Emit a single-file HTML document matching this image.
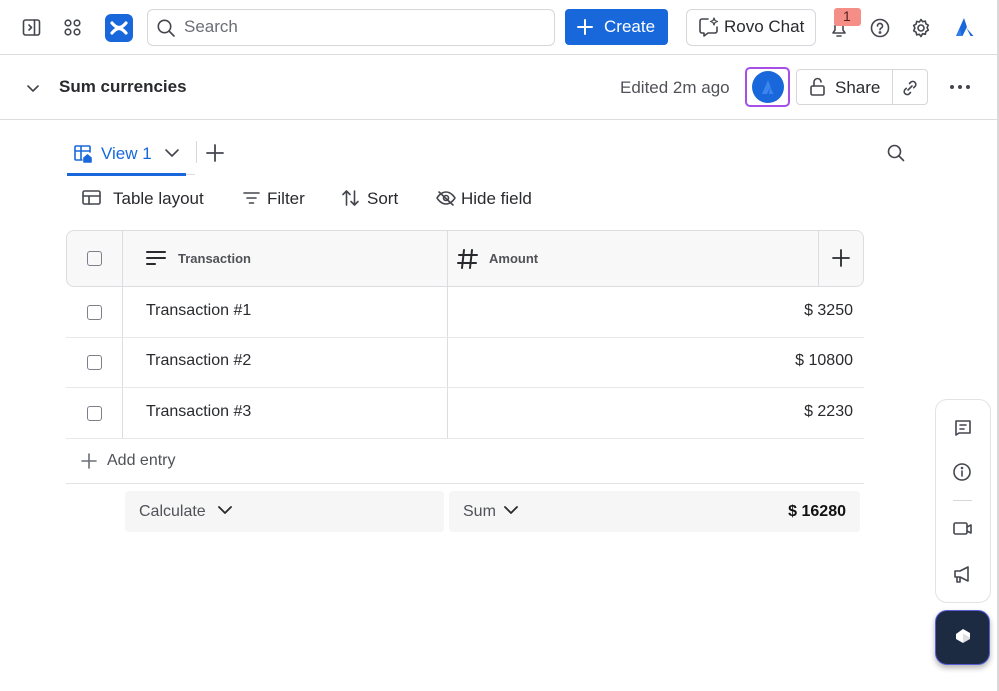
<!DOCTYPE html>
<html><head><meta charset="utf-8"><style>
*{box-sizing:border-box;margin:0;padding:0}
body{width:999px;height:691px;overflow:hidden;background:#fff;font-family:"Liberation Sans",sans-serif;color:#292a2e;position:relative}
.a{position:absolute}
svg{position:absolute;fill:none;stroke:#44464d;stroke-width:1.6;stroke-linecap:round;stroke-linejoin:round}
.btn{position:absolute;border:1px solid #d5d7db;border-radius:4px;background:#fff}
.t{position:absolute;white-space:nowrap}
</style></head><body>
<div class="a" style="left:997px;top:0;width:2px;height:691px;background:#d9d9d9"></div>
<div class="a" style="left:0;top:54px;width:997px;height:1px;background:#dcdde0"></div>
<div class="a" style="left:0;top:119px;width:997px;height:1px;background:#dcdde0"></div>
<svg style="left:22px;top:18px" width="20" height="20"><rect x="1.5" y="2" width="16" height="15" rx="2"/><path d="M12.5 2v15M7 7l2.5 2.5L7 12"/></svg>
<svg style="left:62px;top:17px" width="22" height="22"><circle cx="6" cy="6" r="2.8"/><circle cx="15" cy="6" r="2.8"/><circle cx="6" cy="15" r="2.8"/><circle cx="15" cy="15" r="2.8"/></svg>
<div class="a" style="left:105px;top:14px;width:28px;height:28px;border-radius:6px;background:#1868db"></div>
<svg style="left:105px;top:14px;stroke:#fff;stroke-width:3.2" width="28" height="28"><path d="M7 9c5 6 9 6 14 0M7 19c5-6 9-6 14 0"/></svg>
<div class="btn" style="left:147px;top:9px;width:408px;height:37px;border-radius:6px"></div>
<svg style="left:156px;top:18px" width="20" height="20"><circle cx="8.5" cy="8.5" r="6.2"/><path d="M13 13l5 5"/></svg>
<div class="t" style="left:184px;top:17px;font-size:17px;color:#6b6e76">Search</div>
<div class="a" style="left:565px;top:9px;width:103px;height:36px;border-radius:4px;background:#1868db"></div>
<svg style="left:576px;top:18px;stroke:#fff;stroke-width:2" width="18" height="18"><path d="M9 2v14M2 9h14"/></svg>
<div class="t" style="left:604px;top:17px;font-size:17px;color:#fff">Create</div>
<div class="btn" style="left:686px;top:9px;width:130px;height:37px;border-radius:6px"></div>
<svg style="left:698px;top:16px" width="22" height="22"><path d="M10 3H4a2 2 0 0 0-2 2v10a2 2 0 0 0 2 2h2v3l4-3h7a2 2 0 0 0 2-2v-4"/><path d="M16 2l1 2.5 2.5 1-2.5 1-1 2.5-1-2.5-2.5-1 2.5-1z" stroke-width="1.2"/></svg>
<div class="t" style="left:724px;top:17px;font-size:17px;color:#292a2e">Rovo Chat</div>
<svg style="left:829px;top:18px" width="20" height="20"><path d="M4 15h12l-2-3V8a4 4 0 0 0-8 0v4zM8 18h4"/></svg>
<div class="a" style="left:834px;top:8px;width:27px;height:18px;border-radius:3px;background:#f58e87"></div>
<div class="t" style="left:843px;top:8px;font-size:14px;color:#5a1d1d">1</div>
<svg style="left:869px;top:17px" width="22" height="22"><circle cx="11" cy="11" r="8.5"/><path d="M8.5 9a2.5 2.5 0 1 1 3.3 2.3c-.6.3-.8.7-.8 1.4"/><circle cx="11" cy="15.5" r=".6"/></svg>
<svg style="left:910px;top:17px" width="22" height="22"><circle cx="11" cy="11" r="3"/><path d="M11 2.5l1.6 2.2 2.7-.6.6 2.7 2.4 1.4-1.2 2.5 1.2 2.5-2.4 1.4-.6 2.7-2.7-.6L11 19.5l-1.6-2.2-2.7.6-.6-2.7-2.4-1.4L4.9 11 3.7 8.5l2.4-1.4.6-2.7 2.7.6z"/></svg>
<svg style="left:952px;top:16px;stroke:none" width="24" height="24"><path d="M12 2L4 20h6.5L15 11z" fill="#1868db"/><path d="M14.5 12l4 8h3z" fill="#1868db"/><path d="M8 13l-4 7h6z" fill="#357de8"/></svg>
<svg style="left:25px;top:80px" width="16" height="16"><path d="M3 6l5 5 5-5"/></svg>
<div class="t" style="left:59px;top:77px;font-size:17px;font-weight:bold;color:#292a2e">Sum currencies</div>
<div class="t" style="left:620px;top:78px;font-size:17px;color:#505258">Edited 2m ago</div>
<div class="a" style="left:745px;top:67px;width:45px;height:40px;border:2px solid #a64ee6;border-radius:5px"></div>
<div class="a" style="left:752px;top:71px;width:32px;height:32px;border-radius:50%;background:#1868db"></div>
<svg style="left:758px;top:77px;stroke:none" width="20" height="20"><path d="M10 3L4 17h5l3.5-7.5z" fill="#3c84f0"/><path d="M12 10l3.5 7h-4.5z" fill="#3c84f0"/></svg>
<div class="btn" style="left:796px;top:69px;width:132px;height:36px"></div>
<div class="a" style="left:892px;top:69px;width:1px;height:36px;background:#d5d7db"></div>
<svg style="left:808px;top:76px" width="20" height="22"><rect x="3" y="10" width="13" height="9" rx="1.5"/><path d="M6 10V6a3.5 3.5 0 0 1 7 0"/></svg>
<div class="t" style="left:835px;top:78px;font-size:17px;color:#292a2e">Share</div>
<svg style="left:900px;top:78px" width="20" height="20"><path d="M8 12l4-4M9.5 5.5l1.5-1.5a3 3 0 0 1 4.2 4.2l-1.5 1.5M10.5 14.5l-1.5 1.5a3 3 0 0 1-4.2-4.2l1.5-1.5"/></svg>
<svg style="left:948px;top:80px;stroke:none" width="24" height="14"><circle cx="4" cy="7" r="2" fill="#44464d"/><circle cx="12" cy="7" r="2" fill="#44464d"/><circle cx="20" cy="7" r="2" fill="#44464d"/></svg>
<svg style="left:73px;top:144px;stroke:#1868db" width="22" height="20"><path d="M9 16H3a1 1 0 0 1-1-1V3a1 1 0 0 1 1-1h13a1 1 0 0 1 1 1v5M2 7h15M8 2v14"/><path d="M11 18v-4l3.5-3 3.5 3v4z" fill="#1868db"/></svg>
<div class="t" style="left:101px;top:144px;font-size:17px;color:#1868db">View 1</div>
<svg style="left:163px;top:145px" width="18" height="16"><path d="M3 5l6 6 6-6"/></svg>
<div class="a" style="left:196px;top:141px;width:1px;height:22px;background:#d5d7db"></div>
<svg style="left:205px;top:143px;stroke-width:1.8" width="20" height="20"><path d="M10 2v16M2 10h16"/></svg>
<div class="a" style="left:67px;top:173px;width:119px;height:3px;background:#1868db"></div>
<div class="a" style="left:186px;top:174px;width:9px;height:1px;background:#dcdde0"></div>
<svg style="left:886px;top:143px" width="20" height="20"><circle cx="8.5" cy="8.5" r="6"/><path d="M13 13l4.5 4.5"/></svg>
<svg style="left:81px;top:189px" width="22" height="18"><rect x="2" y="2" width="17" height="13" rx="1.5"/><path d="M2 7h17M8 7v8"/></svg>
<div class="t" style="left:113px;top:189px;font-size:17px">Table layout</div>
<svg style="left:242px;top:189px" width="20" height="18"><path d="M2 4h15M5 9h9M7.5 14h4"/></svg>
<div class="t" style="left:267px;top:189px;font-size:17px">Filter</div>
<svg style="left:341px;top:188px" width="20" height="20"><path d="M5.5 17V3M2 6.5L5.5 3 9 6.5M13.5 3v14M10 13.5l3.5 3.5 3.5-3.5"/></svg>
<div class="t" style="left:367px;top:189px;font-size:17px">Sort</div>
<svg style="left:435px;top:188px" width="22" height="20"><path d="M2 10s3.5-6 9-6 9 6 9 6-3.5 6-9 6-9-6-9-6zM4 4l14 13"/><circle cx="11" cy="10" r="2.5"/></svg>
<div class="t" style="left:461px;top:189px;font-size:17px">Hide field</div>
<div class="a" style="left:66px;top:230px;width:798px;height:57px;border:1px solid #dcdde0;border-radius:8px;background:#f8f8f8"></div>
<div class="a" style="left:122px;top:231px;width:1px;height:207px;background:#dcdde0"></div>
<div class="a" style="left:447px;top:231px;width:1px;height:207px;background:#dcdde0"></div>
<div class="a" style="left:818px;top:231px;width:1px;height:55px;background:#dcdde0"></div>
<div class="a" style="left:66px;top:337px;width:798px;height:1px;background:#e8e8ea"></div>
<div class="a" style="left:66px;top:387px;width:798px;height:1px;background:#e8e8ea"></div>
<div class="a" style="left:66px;top:438px;width:798px;height:1px;background:#e8e8ea"></div>
<div class="a" style="left:66px;top:483px;width:798px;height:1px;background:#e2e3e5"></div>
<div class="a" style="left:87px;top:251px;width:15px;height:15px;border:1.5px solid #7d8089;border-radius:3px"></div>
<div class="a" style="left:87px;top:305px;width:15px;height:15px;border:1.5px solid #7d8089;border-radius:3px"></div>
<div class="a" style="left:87px;top:355px;width:15px;height:15px;border:1.5px solid #7d8089;border-radius:3px"></div>
<div class="a" style="left:87px;top:406px;width:15px;height:15px;border:1.5px solid #7d8089;border-radius:3px"></div>
<svg style="left:145px;top:248px;stroke:#292a2e;stroke-width:2" width="22" height="22"><path d="M2 4h18M2 10h18M2 16h8"/></svg>
<div class="t" style="left:178px;top:251px;font-size:13px;font-weight:bold;color:#505258">Transaction</div>
<svg style="left:457px;top:248px;stroke:#292a2e;stroke-width:2" width="22" height="22"><path d="M7 2l-2 18M15 2l-2 18M2 7h18M1 15h18"/></svg>
<div class="t" style="left:489px;top:251px;font-size:13px;font-weight:bold;color:#505258">Amount</div>
<svg style="left:831px;top:248px;stroke:#292a2e;stroke-width:1.8" width="20" height="20"><path d="M10 2v16M2 10h16"/></svg>
<div class="t" style="left:146px;top:302px;font-size:16px">Transaction #1</div>
<div class="t" style="left:146px;top:352px;font-size:16px">Transaction #2</div>
<div class="t" style="left:146px;top:403px;font-size:16px">Transaction #3</div>
<div class="t" style="right:146px;top:302px;font-size:16px">$ 3250</div>
<div class="t" style="right:146px;top:352px;font-size:16px">$ 10800</div>
<div class="t" style="right:146px;top:403px;font-size:16px">$ 2230</div>
<svg style="left:81px;top:453px;stroke:#6b6e76" width="16" height="16"><path d="M8 1v14M1 8h14"/></svg>
<div class="t" style="left:107px;top:452px;font-size:16px;color:#505258">Add entry</div>
<div class="a" style="left:125px;top:491px;width:319px;height:41px;border-radius:4px;background:#f6f6f6"></div>
<div class="a" style="left:449px;top:491px;width:411px;height:41px;border-radius:4px;background:#f6f6f6"></div>
<div class="t" style="left:139px;top:503px;font-size:16px;color:#505258">Calculate</div>
<svg style="left:216px;top:504px;stroke:#292a2e;stroke-width:1.8" width="18" height="14"><path d="M3 3l6 6 6-6"/></svg>
<div class="t" style="left:463px;top:503px;font-size:16px;color:#505258">Sum</div>
<svg style="left:502px;top:504px;stroke:#292a2e;stroke-width:1.8" width="18" height="14"><path d="M3 3l6 6 6-6"/></svg>
<div class="t" style="right:153px;top:503px;font-size:16px;font-weight:bold;color:#111">$ 16280</div>
<div class="a" style="left:935px;top:399px;width:56px;height:204px;border:1px solid #e2e3e5;border-radius:12px;background:#fff"></div>
<svg style="left:952px;top:417px" width="22" height="22"><path d="M4 18V4h14v12H7z"/><path d="M8 8h6M8 12h4"/></svg>
<svg style="left:952px;top:462px" width="22" height="22"><circle cx="10" cy="10" r="8"/><path d="M10 9v5"/><circle cx="10" cy="6" r=".5"/></svg>
<div class="a" style="left:953px;top:500px;width:19px;height:1px;background:#d5d7db"></div>
<svg style="left:952px;top:519px" width="24" height="20"><rect x="2" y="4" width="13" height="11" rx="1.5"/><path d="M15 8l4-2v8l-4-2"/></svg>
<svg style="left:952px;top:564px" width="22" height="22"><path d="M3 7h5l8-4v14l-8-4H3zM5 13v5h3v-5"/></svg>
<div class="a" style="left:935px;top:610px;width:55px;height:55px;border-radius:12px;background:#1c2b42;box-shadow:0 3px 6px rgba(0,0,0,.3);border:1px solid #5a5ed6"></div>
<svg style="left:950px;top:625px;stroke:none" width="26" height="26"><path d="M13 4l7 4v5l-7-4v9l-7-4V9l7-5z" fill="#fff"/><path d="M13 9v9l7-4v-1z" fill="#fff" opacity=".85"/></svg>
</body></html>
